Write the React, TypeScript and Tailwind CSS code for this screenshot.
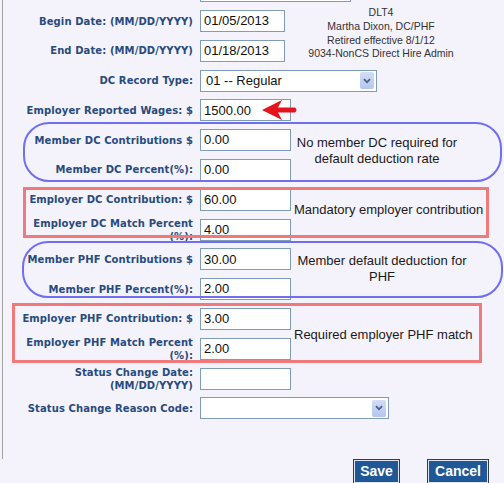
import React from "react";

const labelCls =
  "w-[190px] shrink-0 pl-[14px] pr-0 text-right font-['DejaVu_Sans',sans-serif] text-[10px] font-bold leading-[13px] tracking-[0.1px] text-[#284b7d]";

function Field({ value, w }: { value: string; w: string }) {
  return (
    <div
      className={`${w} flex h-[22px] items-center border border-[#7f9db9] bg-white px-[3px] font-['Liberation_Sans',Arial,sans-serif] text-[13px] text-[#111]`}
    >
      {value}
    </div>
  );
}

function Select({ value, w }: { value: string; w: string }) {
  return (
    <div
      className={`${w} flex h-[22px] items-center justify-between border border-[#7f9db9] bg-white pl-[5px] pr-[2px] font-['Liberation_Sans',Arial,sans-serif] text-[13px] text-[#111]`}
    >
      <span>{value}</span>
      <div className="flex h-[17px] w-[14px] items-center justify-center rounded-[2px] bg-gradient-to-b from-[#d3def6] to-[#b3c6ee]">
        <svg width="8" height="6" viewBox="0 0 8 6">
          <path d="M1 1.2 L4 4.3 L7 1.2" fill="none" stroke="#4a5d85" strokeWidth="1.8" />
        </svg>
      </div>
    </div>
  );
}

function Row({ label, children }: { label?: React.ReactNode; children: React.ReactNode }) {
  return (
    <div className="flex h-[29.8px] items-center">
      <div className={labelCls}>{label}</div>
      <div className="ml-[7px]">{children}</div>
    </div>
  );
}

export default function App() {
  return (
    <div className="relative h-[483px] w-[504px] overflow-hidden bg-[#f4f2fb] pl-[2px]">
      <div className="h-full border-l border-[#a3a3a3]">
        <div className="-mt-[23.7px]">
          <Row>
            <Field value="" w="w-[151px]" />
          </Row>
          <div className="flex">
            <div className="w-[297px]">
              <Row label="Begin Date: (MM/DD/YYYY)">
                <Field value="01/05/2013" w="w-[85px]" />
              </Row>
              <Row label="End Date: (MM/DD/YYYY)">
                <Field value="01/18/2013" w="w-[85px]" />
              </Row>
            </div>
            <div className="w-[162px] text-center font-['Liberation_Sans',Arial,sans-serif] text-[10.5px] leading-[13.7px] text-[#333]">
              <div>DLT4</div>
              <div>Martha Dixon, DC/PHF</div>
              <div>Retired effective 8/1/12</div>
              <div>9034-NonCS Direct Hire Admin</div>
            </div>
          </div>
          <Row label="DC Record Type:">
            <Select value="01 -- Regular" w="w-[177px]" />
          </Row>
          <Row label="Employer Reported Wages: $">
            <Field value="1500.00" w="w-[91px]" />
          </Row>
          <Row label="Member DC Contributions $">
            <Field value="0.00" w="w-[91px]" />
          </Row>
          <Row label="Member DC Percent(%):">
            <Field value="0.00" w="w-[91px]" />
          </Row>
          <Row label="Employer DC Contribution: $">
            <Field value="60.00" w="w-[91px]" />
          </Row>
          <Row label="Employer DC Match Percent (%):">
            <Field value="4.00" w="w-[91px]" />
          </Row>
          <Row label="Member PHF Contributions $">
            <Field value="30.00" w="w-[91px]" />
          </Row>
          <Row label="Member PHF Percent(%):">
            <Field value="2.00" w="w-[91px]" />
          </Row>
          <Row label="Employer PHF Contribution: $">
            <Field value="3.00" w="w-[91px]" />
          </Row>
          <Row label="Employer PHF Match Percent (%):">
            <Field value="2.00" w="w-[91px]" />
          </Row>
          <Row label="Status Change Date: (MM/DD/YYYY)">
            <Field value="" w="w-[91px]" />
          </Row>
          <Row label="Status Change Reason Code:">
            <Select value="" w="w-[189px]" />
          </Row>
          <div className="ml-[350px] mt-[35.7px] flex gap-[27px] font-['Liberation_Sans',Arial,sans-serif] text-[14px] font-bold text-white">
            <div className="flex h-[25px] w-[47px] items-center justify-center border border-[#3a3a3a] bg-[#1f5797] shadow-[inset_0_0_0_1px_#dfe6f3]">
              Save
            </div>
            <div className="flex h-[25px] w-[62px] items-center justify-center border border-[#3a3a3a] bg-[#1f5797] shadow-[inset_0_0_0_1px_#dfe6f3]">
              Cancel
            </div>
          </div>
        </div>
      </div>

      {/* annotation overlays */}
      <div className="pointer-events-none absolute left-[23px] top-[122px] h-[60px] w-[479px] rounded-[26px] border-2 border-[#6f6ff0]" />
      <div className="pointer-events-none absolute left-[23px] top-[187px] h-[51px] w-[466px] border-[3px] border-[#f07a7a]" />
      <div className="pointer-events-none absolute left-[22px] top-[241px] h-[57px] w-[481px] rounded-[26px] border-2 border-[#6f6ff0]" />
      <div className="pointer-events-none absolute left-[12px] top-[303px] h-[60px] w-[470px] border-[3px] border-[#f07a7a]" />

      <div className="absolute left-[287px] top-[135px] w-[180px] text-center font-['Liberation_Sans',Arial,sans-serif] text-[13px] leading-[16px] text-[#1a1a1a]">
        No member DC required for
        <br />
        default deduction rate
      </div>
      <div className="absolute left-[294px] top-[202px] whitespace-nowrap font-['Liberation_Sans',Arial,sans-serif] text-[13px] leading-[16px] text-[#1a1a1a]">
        Mandatory employer contribution
      </div>
      <div className="absolute left-[292px] top-[253px] w-[180px] text-center font-['Liberation_Sans',Arial,sans-serif] text-[13px] leading-[16px] text-[#1a1a1a]">
        Member default deduction for
        <br />
        PHF
      </div>
      <div className="absolute left-[294px] top-[327px] whitespace-nowrap font-['Liberation_Sans',Arial,sans-serif] text-[13px] leading-[16px] text-[#1a1a1a]">
        Required employer PHF match
      </div>

      <svg className="absolute left-[260px] top-[98px]" width="40" height="24" viewBox="0 0 40 24">
        <path d="M2 12 L22 2 L18 9.5 L35 9.5 Q38 12 35 14.5 L18 14.5 L22 22 Z" fill="#e3161e" />
      </svg>
    </div>
  );
}
